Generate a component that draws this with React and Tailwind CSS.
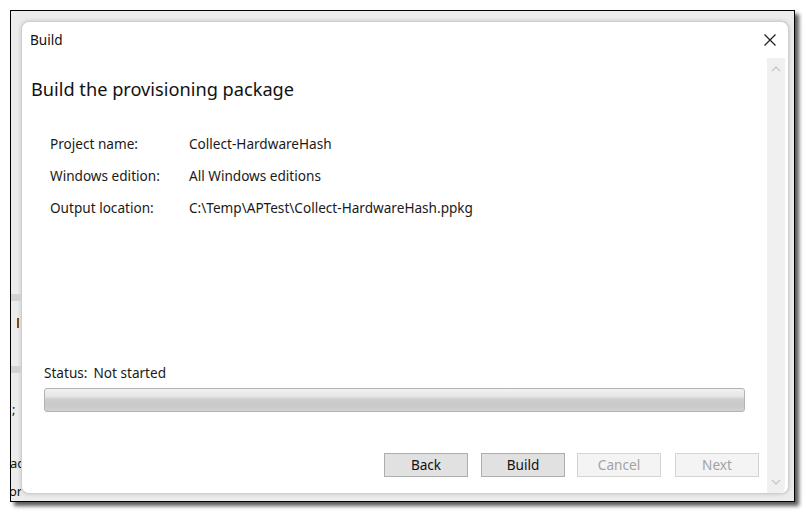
import React from 'react'

const fontStack = "font-['Noto_Sans','Open_Sans',sans-serif]"

const Btn = ({ label, disabled, className = '' }) => (
  <button
    type="button"
    className={
      (disabled
        ? 'w-[84px] h-[24px] border border-[#d4d4d4] bg-[#f4f4f4] text-[13.6px] text-[#a3a3a3] leading-none '
        : 'w-[84px] h-[24px] border border-[#adadad] bg-[#e1e1e1] text-[13.6px] text-[#111] leading-none ') + className
    }
  >
    {label}
  </button>
)

const Row = ({ label, value }) => (
  <div className="flex h-[20px] items-center text-[13.6px] text-[#1a1a1a]">
    <span className="w-[139px]">{label}</span>
    <span>{value}</span>
  </div>
)

export default function App() {
  return (
    <div className={`w-[807px] h-[515px] bg-white pt-[10px] pl-[10px] ${fontStack}`}>
      {/* screenshot frame */}
      <div className="w-[785px] h-[492px] border border-black bg-[#ececec] shadow-[4px_4px_4px_rgba(0,0,0,0.65)] flex overflow-hidden">
        {/* bits of the window underneath */}
        <div className="w-[10px] shrink-0 relative overflow-hidden text-[13px] text-[#111]">
          <div className="absolute left-0 top-[283px] w-[10px] h-[7px] bg-[#d2d2d2]" />
          <div className="absolute left-[6px] top-[307px] w-[2px] h-[10px] bg-[#7a4a1c]" />
          <div className="absolute left-0 top-[355px] w-[10px] h-[7px] bg-[#d2d2d2]" />
          <div className="absolute left-[1px] top-[392px] leading-none">;</div>
          <div className="absolute -left-[1px] top-[446px] leading-none">ac</div>
          <div className="absolute -left-[2px] top-[474px] leading-none">or.</div>
        </div>

        {/* dialog */}
        <div className="mt-[10px] w-[768px] h-[473px] bg-white rounded-[8px] border border-[#cfcfcf] shadow-[0_0_4px_rgba(0,0,0,0.18)] flex flex-col">
          <div className="h-[36px] shrink-0 flex items-center justify-between pl-[8px] pr-[11px]">
            <span className="text-[13.6px] text-[#111]">Build</span>
            <svg width="14" height="14" viewBox="0 0 14 14">
              <path d="M1.5 1.5 L12.5 12.5 M12.5 1.5 L1.5 12.5" stroke="#222" strokeWidth="1.3" fill="none" />
            </svg>
          </div>

          <div className="flex flex-1 min-h-0">
            <div className="flex-1 flex flex-col pl-[9px]">
              <h1 className="mt-[17px] text-[18.2px] leading-[28px] text-[#111]">Build the provisioning package</h1>

              <div className="mt-[31px] pl-[19px] flex flex-col gap-[12px]">
                <Row label="Project name:" value="Collect-HardwareHash" />
                <Row label="Windows edition:" value="All Windows editions" />
                <Row label="Output location:" value="C:\Temp\APTest\Collect-HardwareHash.ppkg" />
              </div>

              <div className="mt-[145px] pl-[13px] h-[20px] flex items-center text-[13.6px] text-[#1a1a1a]">
                <span>Status:</span>
                <span className="ml-[6px]">Not started</span>
              </div>

              <div className="ml-[13px] mt-[5px] w-[701px] h-[24px] rounded-[3px] border border-[#b2b2b2] bg-[linear-gradient(to_bottom,#f2f2f2_0%,#e4e4e4_35%,#cfcfcf_45%,#c9c9c9_75%,#d2d2d2_100%)]" />

              <div className="mt-[41px] flex justify-end pr-[8px]">
                <Btn label="Back" />
                <Btn label="Build" className="ml-[13px]" />
                <Btn label="Cancel" disabled className="ml-[12px]" />
                <Btn label="Next" disabled className="ml-[14px]" />
              </div>
            </div>

            {/* scrollbar */}
            <div className="w-[18px] mr-[3px] bg-[#f0f0f0] rounded-br-[6px] flex flex-col items-center justify-between py-[8px]">
              <svg width="10" height="6" viewBox="0 0 10 6">
                <path d="M1 5 L5 1 L9 5" stroke="#c4c4c4" strokeWidth="1.2" fill="none" />
              </svg>
              <svg width="10" height="6" viewBox="0 0 10 6">
                <path d="M1 1 L5 5 L9 1" stroke="#c4c4c4" strokeWidth="1.2" fill="none" />
              </svg>
            </div>
          </div>
        </div>
      </div>
    </div>
  )
}
